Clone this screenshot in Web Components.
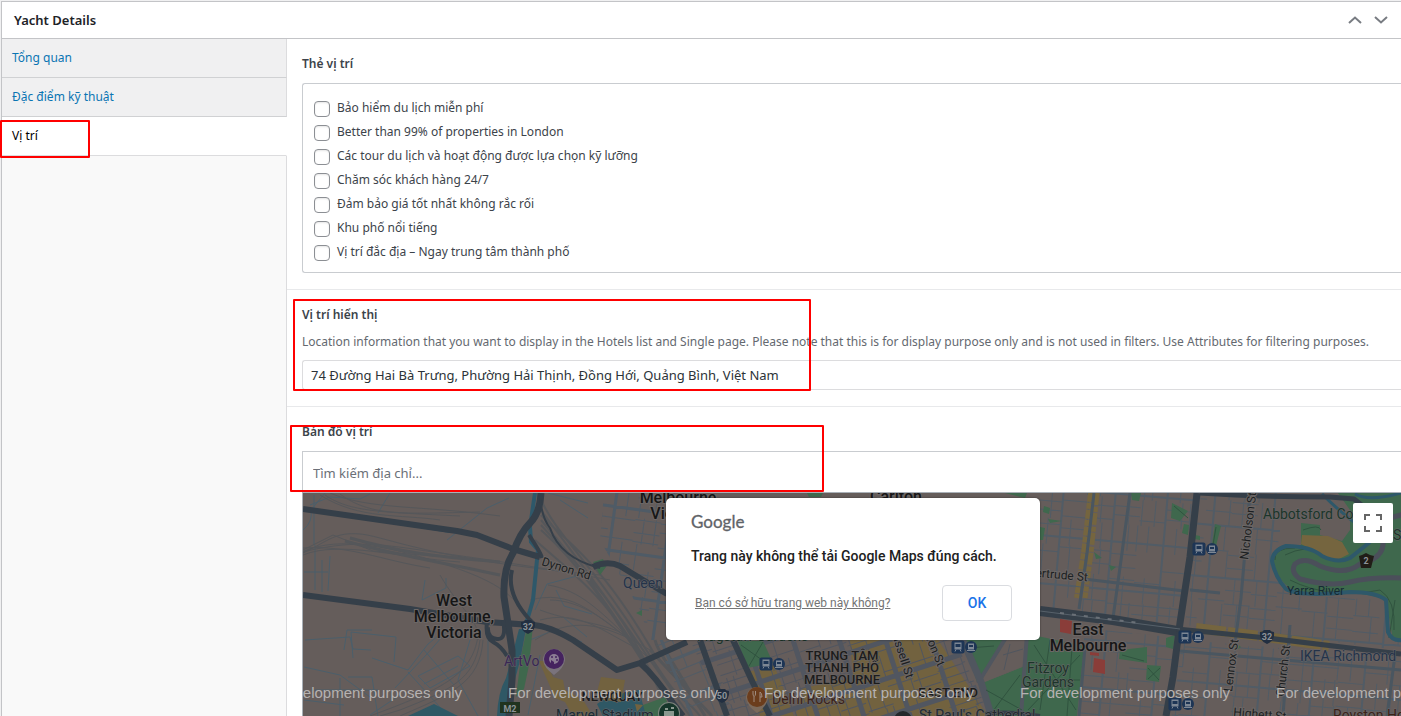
<!DOCTYPE html>
<html lang="vi">
<head>
<meta charset="utf-8">
<title>Yacht Details</title>
<style>
  body { margin: 0; background: #f0f0f1; color: #3c434a; font: 12px/20px "Noto Sans", "Open Sans", sans-serif; overflow-x: hidden; }
</style>
</head>
<body>
<meta-box heading="Yacht Details">
  <side-tabs slot="tabs">
    <tab-link href="#overview">Tổng quan</tab-link>
    <tab-link href="#specs">Đặc điểm kỹ thuật</tab-link>
    <tab-link href="#location" active>Vị trí<mark-frame slot="mark" style="--x:-2px;--y:3px;--w:90px;--h:38px"></mark-frame></tab-link>
  </side-tabs>
  <check-field label="Thẻ vị trí">
    <check-item label="Bảo hiểm du lịch miễn phí"></check-item>
    <check-item label="Better than 99% of properties in London"></check-item>
    <check-item label="Các tour du lịch và hoạt động được lựa chọn kỹ lưỡng"></check-item>
    <check-item label="Chăm sóc khách hàng 24/7"></check-item>
    <check-item label="Đảm bảo giá tốt nhất không rắc rối"></check-item>
    <check-item label="Khu phố nổi tiếng"></check-item>
    <check-item label="Vị trí đắc địa – Ngay trung tâm thành phố"></check-item>
  </check-field>
  <text-field label="Vị trí hiển thị" value="74 Đường Hai Bà Trưng, Phường Hải Thịnh, Đồng Hới, Quảng Bình, Việt Nam"
    hint="Location information that you want to display in the Hotels list and Single page. Please note that this is for display purpose only and is not used in filters. Use Attributes for filtering purposes.">
    <mark-frame slot="mark" style="--x:6px;--y:9px;--w:518px;--h:92px"></mark-frame>
  </text-field>
  <text-field variant="search" label="Bản đồ vị trí" placeholder="Tìm kiếm địa chỉ...">
    <mark-frame slot="mark" style="--x:3px;--y:18px;--w:534px;--h:67px"></mark-frame>
    <location-map slot="after">
      <map-dialog></map-dialog>
    </location-map>
  </text-field>
</meta-box>

<script>
const define = (name, html, setup) => customElements.define(name, class extends HTMLElement {
  constructor() {
    super();
    this.attachShadow({ mode: 'open' }).innerHTML = html;
  }
  connectedCallback() { if (setup) setup(this, this.shadowRoot); }
});

define('mark-frame', `<style>
  :host { position: absolute; left: var(--x); top: var(--y); width: var(--w); height: var(--h); box-sizing: border-box; border: 2px solid #f00; border-radius: 1px; pointer-events: none; z-index: 2; }
</style>`);

define('meta-box', `<style>
  :host { display: block; margin-top: 1px; border: 1px solid #c3c4c7; border-right: 0; border-bottom: 0; margin-left: 1px; background: #fff; }
  header { display: flex; align-items: center; justify-content: space-between; height: 36px; padding: 0 7px 0 12px; border-bottom: 1px solid #c3c4c7; }
  h2 { margin: 0; font-size: 13px; font-weight: 600; color: #1d2327; }
  .order { display: flex; }
  button { display: grid; place-items: center; width: 26px; height: 36px; padding: 0; border: 0; background: none; color: #787c82; cursor: pointer; }
  .columns { display: flex; align-items: stretch; }
  main { flex: 1; min-width: 0; overflow: clip; overflow-clip-margin: 4px; }
</style>
<header><h2></h2>
  <div class="order">
    <button type="button" aria-label="Move up"><svg width="14" height="10" viewBox="0 0 14 10" fill="none" stroke="currentColor" stroke-width="2"><path d="M1 8 7 2.500 13 8"/></svg></button>
    <button type="button" aria-label="Move down"><svg width="14" height="10" viewBox="0 0 14 10" fill="none" stroke="currentColor" stroke-width="2"><path d="M1 2 7 7.500 13 2"/></svg></button>
  </div>
</header>
<div class="columns"><slot name="tabs"></slot><main><slot></slot></main></div>`,
(el, root) => { root.querySelector('h2').textContent = el.getAttribute('heading'); });

define('side-tabs', `<style>
  :host { display: block; width: 285px; flex: none; background: linear-gradient(#dcdcde, #dcdcde) right / 1px 100% no-repeat #f9f9f9; }
</style><nav><slot></slot></nav>`);

define('tab-link', `<style>
  :host { display: block; position: relative; }
  a { display: block; padding: 9px 10px; border-right: 1px solid #dcdcde; border-bottom: 1px solid #d0d1d3; background: #f0f0f1; color: #0a75b3; text-decoration: none; }
  :host([active]) a { background: #fff; color: #000; border-color: #fff; border-bottom-color: #dcdcde; }
</style><a><slot></slot></a><slot name="mark"></slot>`,
(el, root) => { root.querySelector('a').href = el.getAttribute('href'); });

define('check-field', `<style>
  :host { display: block; padding: 15px 0 16px 15px; border-bottom: 1px solid #e8e9eb; }
  fieldset { margin: 0; padding: 0; border: 0; min-width: 0; }
  legend { padding: 0; margin-bottom: 9px; font-weight: 600; }
  .box { padding: 13px 11px 7px; border: 1px solid #c9ccd0; border-right: 0; border-radius: 3px 0 0 3px; }
</style><fieldset><legend></legend><div class="box"><slot></slot></div></fieldset>`,
(el, root) => { root.querySelector('legend').textContent = el.getAttribute('label'); });

define('check-item', `<style>
  :host { display: block; }
  label { display: flex; align-items: center; gap: 7px; height: 24px; white-space: nowrap; }
  input { appearance: none; width: 16px; height: 16px; margin: 0; border: 1px solid #8c8f94; border-radius: 4px; background: #fff; box-shadow: inset 0 1px 2px rgba(0,0,0,.1); }
  input:checked { background: #2271b1; }
  span { padding-bottom: 2px; }
</style><label><input type="checkbox"><span></span></label>`,
(el, root) => { root.querySelector('span').textContent = el.getAttribute('label'); });

define('text-field', `<style>
  :host { display: block; position: relative; padding: 15px 0 16px 15px; border-bottom: 1px solid #e8e9eb; }
  label { display: block; font-weight: 600; }
  p { margin: 7px 0 8px; color: #646970; white-space: nowrap; }
  input { display: block; box-sizing: border-box; width: 100%; height: 30px; padding: 0 8px; border: 1px solid #dcdcde; border-right: 0; border-radius: 3px 0 0 3px; background: #fff; color: #2c3338; font: inherit; font-size: 13px; outline: 0; }
  input::placeholder { color: #6b7077; opacity: 1; }
  :host([variant="search"]) { padding-bottom: 0; border-bottom: 0; }
  :host([variant="search"]) input { height: 41px; margin-top: 9px; padding: 2px 10px 0; border-color: #c9ccd0; border-bottom: 0; border-radius: 0; }
</style><label for="field"></label><p id="hint"></p><input id="field" type="text" aria-describedby="hint"><slot name="after"></slot><slot name="mark"></slot>`,
(el, root) => {
  const input = root.querySelector('input'), hint = root.querySelector('p');
  root.querySelector('label').textContent = el.getAttribute('label');
  if (el.hasAttribute('hint')) hint.textContent = el.getAttribute('hint');
  else { hint.remove(); input.removeAttribute('aria-describedby'); }
  input.value = el.getAttribute('value') || '';
  input.placeholder = el.getAttribute('placeholder') || '';
});

define('map-dialog', `<style>
  :host { display: block; box-sizing: border-box; width: 374px; height: 142px; padding: 14px 28px 0 25px; border-radius: 5px; background: #fff; font-family: Roboto, sans-serif; box-shadow: 0 0 2px rgba(0,0,0,.5); }
  .logo { font: 17px/20px Lato, sans-serif; color: #5f6368; -webkit-text-stroke: .3px #5f6368; }
  .message { margin-top: 14px; font-size: 14px; font-weight: 500; line-height: 20px; color: #212121; white-space: nowrap; }
  .actions { display: flex; align-items: center; justify-content: space-between; margin-top: 19px; padding-left: 4px; }
  a { font-size: 12px; color: #757575; text-decoration: underline; }
  button { width: 70px; height: 36px; border: 1px solid #dadce0; border-radius: 4px; background: #fff; color: #1a73e8; font: 500 14px Roboto, sans-serif; }
</style>
<div class="logo">Google</div>
<div class="message">Trang này không thể tải Google Maps đúng cách.</div>
<div class="actions"><a href="#owner">Bạn có sở hữu trang web này không?</a><button type="button">OK</button></div>`);

/* Parallel streets clipped to a district; every few streets is a wider one. */
let clipCount = 0;
function streets(polygon, angle, stepX, stepY, opts = {}) {
  const id = 'district' + (++clipCount);
  const xs = [], ys = [];
  polygon.trim().split(/\s+/).forEach(p => { const [x, y] = p.split(',').map(Number); xs.push(x); ys.push(y); });
  const cx = (Math.min(...xs) + Math.max(...xs)) / 2, cy = (Math.min(...ys) + Math.max(...ys)) / 2;
  const r = Math.hypot(Math.max(...xs) - cx, Math.max(...ys) - cy) + 10;
  let seed = clipCount * 97;
  const rnd = () => (seed = (seed * 16807 + 11) % 2147483647) / 2147483647;
  let thin = '', wide = '';
  const cell = (step, flip) => {
    let n = 0;
    for (let a = -r; a < r; a += step, n++) {
      const main = n % 4 === 0;
      for (let b = -r; b < r; b += 26) {
        if (!main && rnd() < (opts.gaps ?? .3)) continue;
        const o = main ? 0 : (rnd() - .5) * step * .5;
        const x = Math.round(cx + (flip ? b : a + o)), y = Math.round(cy + (flip ? a + o : b));
        const seg = `M${x} ${y}${flip ? 'h' : 'v'}26`;
        if (main) wide += seg; else thin += seg;
      }
    }
  };
  cell(stepX, false); cell(stepY, true);
  return `<clipPath id="${id}"><polygon points="${polygon}"/></clipPath><g clip-path="url(#${id})"><g transform="rotate(${angle} ${cx} ${cy})" stroke="${opts.color || '#515c66'}" fill="none"><path d="${thin}" stroke-width="1"/><path d="${wide}" stroke-width="${opts.wide || 3}"/></g></g>`;
}

const transit = (x, y) => `<g transform="translate(${x} ${y})"><rect x="-6.500" y="-6.500" width="13" height="13" rx="2" fill="#1d3555"/><path d="M-3.500-4.500h7v7h-7z" fill="#7d8794"/><path d="M-3 4.500l1-2M3 4.500l-1-2" stroke="#7d8794"/><path d="M-2.500-3h5v3h-5z" fill="#1d3555"/><circle cx="13" r="6" fill="#1d3555"/><path d="M10-3.500h6v6h-6z" fill="#7d8794"/><path d="M11-2h4v2h-4z" fill="#1d3555"/><path d="M9 3.500h8" stroke="#7d8794"/></g>`;
const shield = (x, y, n) => `<path transform="translate(${x} ${y})" d="M-7-5q3 0 4-2h6q1 2 4 2 1 9-7 12-8-3-7-12z" fill="#222f41"/><text x="${x}" y="${y + 3}" class="badge">${n}</text>`;

const mapArt = () => `
<rect x="302" y="492" width="1102" height="226" fill="#655d5b"/>
<g fill="none" stroke="#4b5f6b" stroke-width="1">
  <path d="M303 530q10-8 8-20l14-17M314 495v50M322 560v32M315 545v45M330 556l-2 35M304 572h24M305 640l45-3 3 12 18 1M344 650l3-20h25M304 667l36 8 30 22M353 658l-2-26 45 5-2 25M348 677h24l6 40M312 690h66M340 678v38M304 700l40 5M372 658l36 12 20-26 16-13M395 688l32-34 22-25M424 650l30 35M408 672l40 44M418 676l40-20 12 10-40 22zM424 684l34-18M425 580l-3 20 24-12v-10M400 695l-30 20M447 540l40-32 22-10M310 505l20-8 30 2 10-5M390 493l-12 20M470 640l-12 40 20 36M535 610l12-26 30-8M560 500l28 18M548 493l40 10M488 640v76M530 640l24-10 28 12M540 655l-12 60M556 590l8 16 28 8M563 617l24 20"/>
</g>
<g fill="none" stroke="#55575a" stroke-width="1">
  <path d="M303 553C330 540 335 532 360 534S430 560 600 575M303 552C350 540 380 544 420 550S510 562 610 580M304 551C340 536 390 546 450 566S510 600 520 604M303 555C340 540 400 558 460 562M303 548C350 545 380 560 430 568M325 495C350 512 380 512 460 516M330 493C370 510 420 505 500 516M340 494C370 516 400 514 480 512M320 495C360 520 400 514 440 520M303 550l30-15 40 16 60 5"/>
  <path d="M541 500C560 540 590 560 640 640S680 690 700 716M541 510C570 550 595 580 650 660L690 716M541 520C575 560 600 590 680 716M541 530C575 560 605 600 660 690M541 515C570 545 600 560 655 655M535 540C580 580 600 590 650 670L670 716M541 525C590 580 620 600 672 716" stroke-width="2"/>
  <path d="M530 600C570 590 590 610 630 640M540 620C580 610 600 630 640 650M548 585C580 590 600 610 640 650M550 600C580 600 610 620 650 660M540 610C580 625 610 620 640 645M535 640C570 618 600 620 650 650M480 640C475 680 450 690 400 710L380 716M483 640C480 684 450 694 400 716M478 636C472 676 440 690 370 716M440 575C460 610 480 620 478 640" stroke-width="1"/>
  <path d="M350 538C400 552 430 556 500 562M345 541C400 556 440 562 500 575M655 640C660 660 690 690 705 716M665 650l40 66M650 650l62 66" stroke-width="3"/>
</g>
${streets('604,493 700,493 700,640 650,640 640,610 600,540', 8, 14, 11, { gaps: .2, color: '#4f5b66' })}
${streets('655,640 700,640 735,716 690,716', -22, 12, 10)}
<path d="M748 672l26-7 20 51h-34zM850 640h88l20 30 30 46H795l8-28 50-10z" fill="#72623f"/>
${streets('690,640 955,640 990,716 725,716', -18, 11, 9, { gaps: .3, wide: 5, color: '#515660' })}
${streets('1040,493 1197,493 1180,625 1040,607', 5, 13, 12, { gaps: .25, wide: 2 })}
${streets('1085,628 1178,638 1167,716 1078,716', 5, 13, 12, { gaps: .4, wide: 2 })}
${streets('1201,493 1285,493 1276,560 1290,595 1380,600 1400,640 1401,650 1185,625', 5, 15, 13, { gaps: .35, wide: 2 })}
${streets('1182,640 1404,658 1404,716 1172,716', 5, 13, 12, { gaps: .25, wide: 2 })}

<g fill="#3f684d">
  <path d="M738 641h25l10 22-26 5z"/>
  <path d="M963 640h42l-28 42z"/>
  <path d="M982 683l43-17-3 50h-28z"/>
  <path d="M1028 634l56 12-7 70h-55z"/>
  <path d="M1172 503l16 8-8 10-9-3zM1184 524l5 1-1 10-6-2zM1215 524l6 2-5 20-4-2zM1131 493h10l-2 8-7-1zM1044 506l6 2-1 6-6-2zM1048 519l14 2-12 2zM1094 552l8 6-6 1zM1109 565l7 2-5 4zM1040 527l5 1-2 12h-3zM1120 650l27-3v16l-28-4zM1147 665l14 1-2 16-13-2zM1166 638l9-3-2 14-7-2zM1236 643l5 4-4 3-3-2zM1195 535l5 1v4l-6-1z"/>
  <path d="M593 562l10-3 3 8-6 8-3-6zM636 613l6-3v6zM643 705l22-8 8 19h-38zM807 493h16l-2 4h-12zM1005 493h22l-2 5z"/>
  <path d="M527 627l6-2-4 40-5 24-8 8 5-40z"/>
  <path d="M1338 493H1404V640H1393L1386 600Q1370 593 1330 592Q1290 600 1277 573Q1266 555 1284 545L1301 545V523L1320 525V535L1342 541L1350 530V510Z"/>
</g>
<path d="M1005 640h22l-3 26-42 17-4-2z" fill="#655d5b"/>
<g fill="none" stroke="#50565f"><path d="M1007 636l-29 47M1027 634l-6 82" stroke-width="4"/><path d="M961 636l20 46 11 36" stroke-width="7"/><path d="M1003 655l20-6M1010 644l-6 26"/></g>
<g stroke="#30533f" fill="none"><path d="M741 645l28 20M763 642l-14 24M968 648l26-2M986 690l36 20M1020 675l-30 40M1034 645l42 65M1080 655l-52 55M1050 640l-10 70M1030 680h50M1072 648l-5 68M1122 655l22 6M1148 668l11 12M1160 668l-12 11M1174 506l14 12M1275 560q-2-12 20-12M1285 555q20-10 40-4M1290 580q40 20 90 10 16 10 14 40M1395 600l-6 38M1216 527l-3 18M1303 530q16-6 18 0"/></g>
<path d="M1302 535l26 1 14 6 7 12-14 7-14-4-9-7-11-6z" fill="#75653f"/>
<path d="M1404 578Q1370 577 1350 582T1300 579Q1290 572 1295 564Q1304 556 1320 566Q1345 576 1360 564Q1385 558 1383 540V520L1404 514" fill="none" stroke="#4b4f5a" stroke-width="5"/>
<g fill="none" stroke="#2e586a">
  <path d="M1404 640Q1392 642 1388 632L1386 600Q1376 592 1350 592Q1300 597 1286 589Q1275 577 1272 561Q1273 550 1286 546Q1310 546 1322 556Q1338 564 1350 558L1370 542" stroke-width="4"/>
  <path d="M1322 494q20 20 40 34M1355 494q14 8 46-1" stroke-width="3"/>
  <path d="M535 493l-5 34 1 15 7 8-5 50-7 24" stroke-width="4"/>
  <path d="M340 515l80 12 30 5" stroke-width="2"/>
</g>
<path d="M519 629l7 0-6 32-6 22-7 16 1 17h-11q1-24 9-38l5-18z" fill="#2f5865"/>
<path d="M408 716l26-12 24 12zM597 704l12-8 30-6 6 22-8 4h-34z" fill="#2f5865"/>
<path d="M539 661l6 0 8 16 10 3 2 10 18 10 10 16h-20l-8-14-10-4zM597 692l4-15 24 3-4 22-18-2zM643 705l-8-1 2 8z" fill="#72623f"/>
<g fill="none" stroke="#75653f"><path d="M1091 493l-7 60-7 45" stroke-width="6" stroke-dasharray="9 1 6 1"/><path d="M1097 493l-6 60-6 45" stroke-width="5" stroke-dasharray="12 2 5 1"/><path d="M1196 628l71 9 62 9" stroke-width="10" stroke-dasharray="30 2"/></g>
<path d="M1094 493l-7 60-8 56M1130 493l-8 60-9 65M1084 579l100 12M1190 590l30 3M1250 493l-9 105-6 45M1290 625l-7 90M1395 655l-8 61M1085 647l-6 69M1180 651l221 19" fill="none" stroke="#4a5660" stroke-width="3"/>

<g fill="none" stroke="#353f49" stroke-linejoin="round">
  <path d="M303 509l154 22 20 4 36 14 27 8" stroke-width="6"/>
  <path d="M303 595l107 14 77 13 46 3q16 1 40 15l44 30 23-7 47-21" stroke-width="6"/>
  <path d="M541 493q-1 20-11 30t-17 30q-10 16-9 44l8 53v30l-3 36" stroke-width="7"/>
  <path d="M529 535q12 18 13 23M512 570q-6 24 18 50l6 6M487 622q-2 16 6 20t14 14M503 620q4 20-6 19t-9-12" stroke-width="4"/>
  <path d="M593 567q14-7 27-1l23 14 24 14" stroke-width="6"/>
  <path d="M640 663q16 14 33 40l10 13M700 640l13 37 14 39M733 640l20 43 17 33" stroke-width="6"/>
  <path d="M540 498q2 20 10 30 10 30 50 40" stroke-width="2"/>
  <path d="M1197 493l-7 64-10 66-7 54-7 39" stroke-width="7"/>
  <path d="M1040 611l73 9 64 11" stroke-width="10"/>
  <path d="M1177 629l90 9 83 10 51 6" stroke-width="5"/>
  <path d="M1200 493q60 4 130 4l24 2 20 16" stroke-width="5"/>
  <path d="M985 714q20-4 55 2" stroke-width="4"/>
</g>
<g fill="none"><path d="M1040 611l140 18" stroke="#57616a"/><path d="M1060 613l80 10" stroke="#6a7077" stroke-width="2" stroke-dasharray="4 8"/></g>
<path d="M1060 619l12 2-1 13-11-2zM1094 658l11 2v14l-12-2zM1090 652l9 1v3l-9-1z" fill="#8a3d39"/>

<g class="big">
  <text x="454" y="606">West</text><text x="454" y="622">Melbourne,</text><text x="454" y="638">Victoria</text>
  <text x="678" y="503">Melbourne</text><text x="678" y="519">Victoria</text>
  <text x="896" y="502">Carlton</text>
  <text x="1088" y="635">East</text><text x="1088" y="651">Melbourne</text>
</g>
<g class="caps"><text x="842" y="660">TRUNG TÂM</text><text x="842" y="672">THÀNH PHỐ</text><text x="842" y="684">MELBOURNE</text><text x="612" y="701">NEWQUAY</text><text x="948" y="697">EAST END</text></g>
<g class="street">
  <text transform="translate(541 565) rotate(17)">Dynon Rd</text>
  <text transform="translate(1027 576) rotate(5)">Gertrude St</text>
  <text transform="translate(890 629) rotate(72)">Russell St</text>
  <text transform="translate(912 606) rotate(67)">Exhibition St</text>
  <text transform="translate(1248 560) rotate(-83)">Nicholson St</text>
  <text transform="translate(1232 692) rotate(-83)">Lennox St</text>
  <text transform="translate(1284 697) rotate(-83)">Church St</text>
  <text transform="translate(1233 716) rotate(5)">Highett St</text>
</g>
<g class="place">
  <text x="623" y="588" fill="#243349">Queen</text><text x="504" y="666" fill="#3a2754">ArtVo</text>
  <text x="697" y="641" fill="#1c3529">Flagstaff Gardens</text>
  <text x="1048" y="673" fill="#1c3529" text-anchor="middle">Fitzroy</text><text x="1048" y="687" fill="#1c3529" text-anchor="middle">Gardens</text>
  <text x="1263" y="519" fill="#1c3529">Abbotsford Convent</text>
  <text x="1393" y="540" fill="#1c3529">St</text>
  <text x="1300" y="661" fill="#243349">IKEA Richmond</text>
  <text x="772" y="704" fill="#3d2318">Delhi Rocks</text><text x="1333" y="720" fill="#3d2318">Royston Hotel</text>
  <text x="556" y="720" fill="#1b2b33">Marvel Stadium</text><text x="919" y="720" fill="#222a2f">St Paul's Cathedral</text>
</g>
<text x="1287" y="595" class="water">Yarra River</text>
${transit(766, 664)}${transit(958, 647)}${transit(1199, 549)}${transit(1185, 637)}${transit(1175, 704)}
${shield(528, 627, '32')}${shield(722, 696, '50')}${shield(1267, 637, '32')}
<path d="M500 702h20v11h-20z" fill="#20331f"/><text x="510" y="712" class="badge">M2</text>
<path d="M1359 556l3-1 4-2 4 2 4 1-3 12h-10z" fill="#211d17"/><text x="1366" y="564" class="badge">2</text>
<path d="M543 660a11 11 0 1 1 22 0q-1 8-11 15-10-7-11-15z" fill="#7a737c"/><circle cx="554" cy="659" r="10" fill="#45235f"/><circle cx="554" cy="659" r="5" fill="#8b7c93"/><g fill="#45235f"><circle cx="552" cy="657" r="1"/><circle cx="556" cy="657" r="1"/><circle cx="557" cy="660" r="1"/><path d="M551 664v-4l3 2v3z"/></g>
<path d="M746 698a11 11 0 1 1 22 0q-1 8-11 15-10-7-11-15z" fill="#7b6a5c"/><circle cx="757" cy="697" r="10" fill="#6b3d1d"/><path d="M753 691v3q0 2 1 2v6M755.500 691v3q0 2-1 2M760 702v-10q2 1 2 5h-2" stroke="#a08d80" stroke-width="1" fill="none"/>
<circle cx="669" cy="713" r="11" fill="#7c837c"/><circle cx="669" cy="713" r="10" fill="#17362b"/><path d="M664 711h10v5h-10zM665 708h3v2h-3zM671 707h3v2h-3z" fill="#8a988f"/>
<circle cx="903" cy="720" r="9" fill="#25282b"/>
<g class="stamp"><text x="252" y="698">For development purposes only</text><text x="508" y="698">For development purposes only</text><text x="764" y="698">For development purposes only</text><text x="1020" y="698">For development purposes only</text><text x="1276" y="698">For development purposes only</text></g>`;

define('location-map', `<style>
  :host { display: flex; justify-content: center; position: relative; height: 224px; margin-right: -2px; box-sizing: border-box; overflow: hidden; border-top: 1px solid #a9b0b7; border-left: 1px solid #a9b0b7; }
  svg.art { position: absolute; inset: 0; width: 100%; height: 100%; }
  text { font-family: Roboto, sans-serif; }
  .big text { font-size: 16px; font-weight: 500; fill: #161616; text-anchor: middle; stroke: #6c6766; stroke-width: 2px; paint-order: stroke; }
  .caps text { font-size: 13px; font-weight: 500; fill: #1c1c1c; text-anchor: middle; stroke: #6c6766; stroke-width: 1px; paint-order: stroke; }
  .street text { font-size: 12px; fill: #1c1f22; stroke: #6c6766; stroke-width: 2px; paint-order: stroke; }
  .place text { font-size: 14px; stroke: #68666a; stroke-width: 1px; paint-order: stroke; }
  .water { font-size: 12px; fill: #152a33; }
  .badge { font-size: 9px; font-weight: 700; fill: #8d9399; text-anchor: middle; }
  .stamp text { font: 15px "Liberation Sans", Arial, sans-serif; fill: #b5b2b1; }
  ::slotted(map-dialog) { position: relative; margin-top: 5px; }
  button { position: absolute; top: 10px; right: 10px; width: 40px; height: 40px; padding: 0; display: grid; place-items: center; border: 0; border-radius: 2px; background: #fff; }
</style>
<svg class="art" viewBox="303 493 1100 223" preserveAspectRatio="xMidYMid slice" role="img" aria-label="Melbourne map">${mapArt()}</svg>
<slot></slot>
<button type="button" aria-label="Toggle fullscreen"><svg width="18" height="18" viewBox="0 0 18 18" fill="none" stroke="#666" stroke-width="2"><path d="M1 6V1h5M12 1h5v5M17 12v5h-5M6 17H1v-5"/></svg></button>`);
</script>
</body>
</html>
